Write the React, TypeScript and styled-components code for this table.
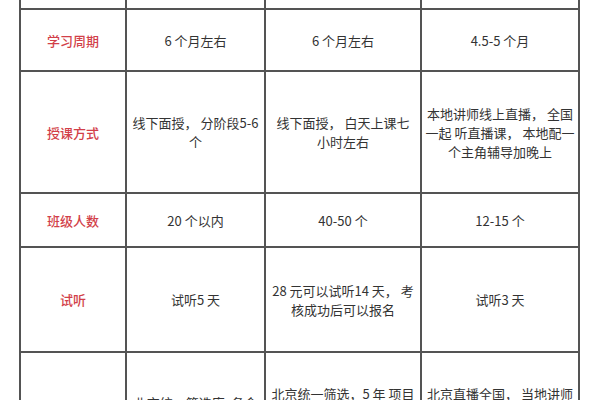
import styled, { createGlobalStyle } from "styled-components";

const GlobalStyle = createGlobalStyle`
  html, body {
    margin: 0;
    padding: 0;
    background: #fff;
  }
  body {
    font-family: "Noto Sans CJK SC", "Noto Sans", sans-serif;
    width: 600px;
    height: 400px;
    overflow: hidden;
  }
`;

const Page = styled.div`
  padding-left: 19px;
`;

const Table = styled.div`
  width: 561px;
  box-sizing: border-box;
  display: flex;
  flex-direction: column;
  gap: 2px;
  padding: 0 2px 2px;
  background: #545454;
`;

const Row = styled.div<{ $h: number }>`
  display: grid;
  grid-template-columns: 104px 137px 154px 156px;
  column-gap: 2px;
  height: ${(p) => p.$h}px;
`;

const Cell = styled.div`
  background: #fff;
  display: flex;
  align-items: center;
  justify-content: center;
  text-align: center;
  white-space: pre-line;
  font-size: 13px;
  line-height: 19px;
  color: #333;
  padding: 0 1px;
`;

const Label = styled(Cell)`
  color: #d23f49;
  font-weight: 500;
  font-size: 13px;
`;

const rows = [
  { label: "", h: 8, cells: ["", "", ""] },
  { label: "学习周期", h: 60, cells: ["6 个月左右", "6 个月左右", "4.5-5 个月"] },
  {
    label: "授课方式",
    h: 120,
    cells: [
      "线下面授， 分阶段5-6\n个",
      "线下面授， 白天上课七\n小时左右",
      "本地讲师线上直播， 全国\n一起 听直播课， 本地配一\n个主角辅导加晚上",
    ],
  },
  { label: "班级人数", h: 52, cells: ["20 个以内", "40-50 个", "12-15 个"] },
  {
    label: "试听",
    h: 103,
    cells: ["试听5 天", "28 元可以试听14 天， 考\n核成功后可以报名", "试听3 天"],
  },
  {
    label: "考核方式",
    h: 118,
    cells: [
      "北京统一筛选库, 各会\n员单位自行考核",
      "北京统一筛选，5 年 项目\n经验以上讲师，全\n职授课",
      "北京直播全国， 当地讲师\n辅导答疑，线上考\n核选拔",
    ],
  },
];

export default function App() {
  return (
    <Page>
      <GlobalStyle />
      <Table>
        {rows.map((r, i) => (
          <Row key={i} $h={r.h}>
            <Label>{i === rows.length - 1 ? "" : r.label}</Label>
            {r.cells.map((c, j) => (
              <Cell key={j}>{c}</Cell>
            ))}
          </Row>
        ))}
      </Table>
    </Page>
  );
}
